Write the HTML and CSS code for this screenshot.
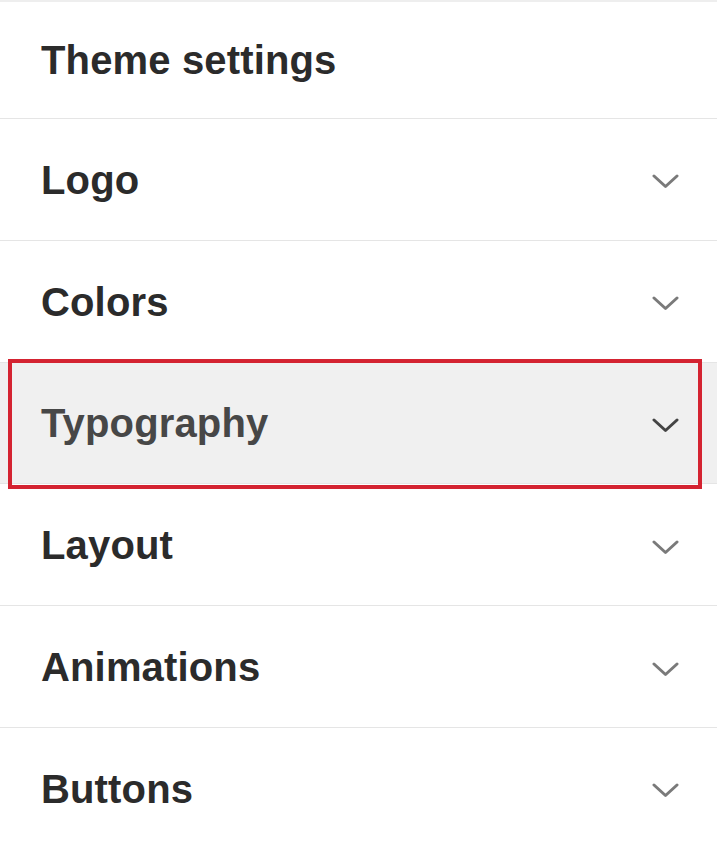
FILE: index.html
```html
<!DOCTYPE html>
<html lang="en">
<head>
<meta charset="utf-8">
<title>Theme settings</title>
<link rel="stylesheet" href="styles.css">
</head>
<body>
<div class="panel">
  <div class="row header"><span class="title">Theme settings</span></div>
  <div class="row"><span class="title">Logo</span><svg class="chev" viewBox="0 0 27 15" width="27" height="15"><polyline points="2,2 13.5,12.5 25,2"/></svg></div>
  <div class="row"><span class="title">Colors</span><svg class="chev" viewBox="0 0 27 15" width="27" height="15"><polyline points="2,2 13.5,12.5 25,2"/></svg></div>
  <div class="row active"><span class="title">Typography</span><svg class="chev" viewBox="0 0 27 15" width="27" height="15"><polyline points="2,2 13.5,12.5 25,2"/></svg><div class="highlight"></div></div>
  <div class="row"><span class="title">Layout</span><svg class="chev" viewBox="0 0 27 15" width="27" height="15"><polyline points="2,2 13.5,12.5 25,2"/></svg></div>
  <div class="row"><span class="title">Animations</span><svg class="chev" viewBox="0 0 27 15" width="27" height="15"><polyline points="2,2 13.5,12.5 25,2"/></svg></div>
  <div class="row"><span class="title">Buttons</span><svg class="chev" viewBox="0 0 27 15" width="27" height="15"><polyline points="2,2 13.5,12.5 25,2"/></svg></div>
</div>
</body>
</html>
```
FILE: styles.css
```css
html, body {
  margin: 0;
  padding: 0;
  background: #ffffff;
}
body {
  font-family: "Liberation Sans", Arial, sans-serif;
  overflow: hidden;
}
.panel {
  border-top: 2px solid #eeeeee;
  display: flex;
  flex-direction: column;
}
.row {
  position: relative;
  box-sizing: border-box;
  height: 121.8px;
  flex: none;
  display: flex;
  align-items: center;
  justify-content: space-between;
  padding: 2px 38px 0 41px;
  border-bottom: 1px solid #e5e5e5;
}
.row.header {
  height: 117px;
  padding-top: 0;
}
.title {
  font-size: 40px;
  font-weight: 700;
  color: #2b2b2b;
  letter-spacing: 0.15px;
}
.chev {
  display: block;
  margin-top: 3px;
  fill: none;
  stroke: #7a7a7a;
  stroke-width: 3;
  stroke-linecap: round;
  stroke-linejoin: round;
}
.row.active {
  background: #f0f0f0;
}
.row.active .title {
  color: #474747;
}
.row.active .chev {
  stroke: #444444;
}
.highlight {
  position: absolute;
  left: 8px;
  right: 15px;
  top: -4px;
  bottom: -6px;
  border: 4px solid #d42331;
  pointer-events: none;
}
```
